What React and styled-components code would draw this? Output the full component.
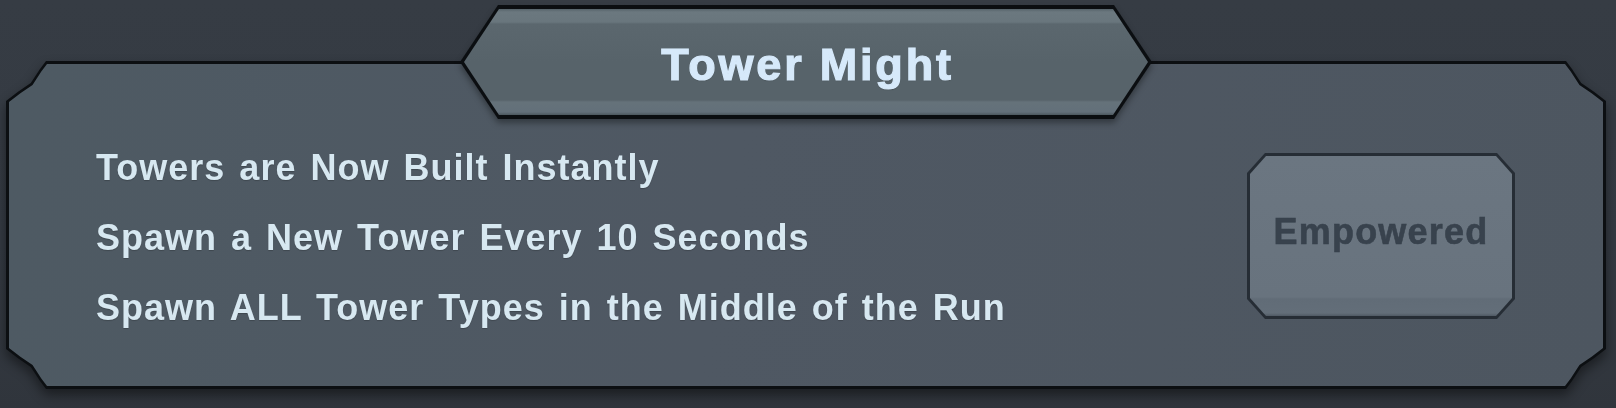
import React from 'react'
import styled, { createGlobalStyle } from 'styled-components'

const GlobalStyle = createGlobalStyle`
  html, body {
    margin: 0;
    padding: 0;
    background: #343a42;
  }
  body {
    font-family: "Liberation Sans", Arial, sans-serif;
  }
  * {
    box-sizing: border-box;
  }
`

const Stage = styled.div`
  width: 1616px;
  height: 408px;
  padding: 5px 10px 0 6px;
  background: linear-gradient(180deg, #363c44 0%, #343a42 60%, #30353c 100%);
  display: flex;
  flex-direction: column;
  align-items: center;
  overflow: hidden;
`

const TabShadow = styled.div`
  position: relative;
  z-index: 1;
  margin-bottom: -58px;
  filter: drop-shadow(0 4px 3px rgba(0, 0, 0, 0.35));
`

const TabFrame = styled.div`
  width: 692px;
  height: 114px;
  padding: 4px;
  background: #0b0e11;
  clip-path: polygon(38px 0, calc(100% - 38px) 0, 100% 50%, calc(100% - 38px) 100%, 38px 100%, 0 50%);
`

const TabFace = styled.div`
  height: 100%;
  display: flex;
  align-items: center;
  justify-content: center;
  padding-top: 5px;
  clip-path: polygon(35px 0, calc(100% - 35px) 0, 100% 50%, calc(100% - 35px) 100%, 35px 100%, 0 50%);
  background: linear-gradient(
    180deg,
    #56636a 0,
    #6b787f 3px,
    #69767d 13px,
    #5b676e 15px,
    #57636a 50%,
    #57636a calc(100% - 15px),
    #65727a calc(100% - 13px),
    #63707a calc(100% - 3px),
    #4c575e 100%
  );
`

const Title = styled.h1`
  margin: 0;
  padding-left: 3px;
  font-size: 45px;
  font-weight: 700;
  letter-spacing: 2.8px;
  line-height: 1;
  color: #d6e9fa;
  -webkit-text-stroke: 1.2px #d6e9fa;
  text-shadow: 0 1px 1px rgba(0, 0, 0, 0.25);
`

const PanelShadow = styled.div`
  filter: drop-shadow(0 6px 6px rgba(0, 0, 0, 0.45));
`

const corners = inset => {
  const c = 40 - inset
  const p = (x, y) => `${x}px ${y}px`
  return `polygon(
    0 ${c}px, ${p(c * 0.3, c * 0.77)}, ${p(c * 0.62, c * 0.55)}, ${p(c * 0.85, c * 0.2)}, ${c}px 0,
    calc(100% - ${c}px) 0, calc(100% - ${c * 0.85}px) ${c * 0.2}px, calc(100% - ${c * 0.62}px) ${c * 0.55}px, calc(100% - ${c * 0.3}px) ${c * 0.77}px, 100% ${c}px,
    100% calc(100% - ${c}px), calc(100% - ${c * 0.3}px) calc(100% - ${c * 0.77}px), calc(100% - ${c * 0.62}px) calc(100% - ${c * 0.55}px), calc(100% - ${c * 0.85}px) calc(100% - ${c * 0.2}px), calc(100% - ${c}px) 100%,
    ${c}px 100%, ${c * 0.85}px calc(100% - ${c * 0.2}px), ${c * 0.62}px calc(100% - ${c * 0.55}px), ${c * 0.3}px calc(100% - ${c * 0.77}px), 0 calc(100% - ${c}px)
  )`
}

const PanelFrame = styled.div`
  width: 1600px;
  height: 328px;
  padding: 3px;
  background: #0c0f12;
  clip-path: ${corners(0)};
`

const PanelFace = styled.div`
  height: 100%;
  display: flex;
  align-items: center;
  justify-content: space-between;
  padding: 69px 88px 43px 87px;
  clip-path: ${corners(2)};
  background: linear-gradient(100deg, #4e5a63 0%, #4f5863 45%, #4d5660 100%);
`

const Lines = styled.ul`
  margin: 0;
  padding: 0;
  list-style: none;
`

const Line = styled.li`
  font-size: 36px;
  font-weight: 700;
  line-height: 70px;
  letter-spacing: 1px;
  word-spacing: 3px;
  color: #d7e8f1;
  white-space: nowrap;
  text-shadow: 0 1px 1px rgba(0, 0, 0, 0.2);
`

const ButtonFrame = styled.div`
  width: 268px;
  height: 166px;
  padding: 3px;
  margin-bottom: 4px;
  background: #262d35;
  clip-path: polygon(18px 0, calc(100% - 18px) 0, 100% 20px, 100% calc(100% - 20px), calc(100% - 18px) 100%, 18px 100%, 0 calc(100% - 20px), 0 20px);
`

const ButtonFace = styled.div`
  height: 100%;
  display: flex;
  align-items: center;
  justify-content: center;
  padding-bottom: 8px;
  clip-path: polygon(16px 0, calc(100% - 16px) 0, 100% 18px, 100% calc(100% - 18px), calc(100% - 16px) 100%, 16px 100%, 0 calc(100% - 18px), 0 18px);
  background: linear-gradient(
    180deg,
    #6b7681 0,
    #68737e calc(100% - 19px),
    #616c77 calc(100% - 17px),
    #636e79 calc(100% - 3px),
    #505a64 100%
  );
`

const ButtonLabel = styled.span`
  font-size: 36px;
  font-weight: 700;
  letter-spacing: 1.2px;
  color: #38424d;
  -webkit-text-stroke: 0.6px #38424d;
`

const perks = [
  'Towers are Now Built Instantly',
  'Spawn a New Tower Every 10 Seconds',
  'Spawn ALL Tower Types in the Middle of the Run',
]

export default function App() {
  return (
    <>
      <GlobalStyle />
      <Stage>
        <TabShadow>
          <TabFrame>
            <TabFace>
              <Title>Tower Might</Title>
            </TabFace>
          </TabFrame>
        </TabShadow>
        <PanelShadow>
          <PanelFrame>
            <PanelFace>
              <Lines>
                {perks.map(p => (
                  <Line key={p}>{p}</Line>
                ))}
              </Lines>
              <ButtonFrame>
                <ButtonFace>
                  <ButtonLabel>Empowered</ButtonLabel>
                </ButtonFace>
              </ButtonFrame>
            </PanelFace>
          </PanelFrame>
        </PanelShadow>
      </Stage>
    </>
  )
}
